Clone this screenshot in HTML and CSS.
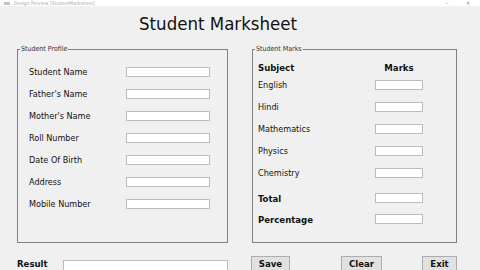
FILE: index.html
```html
<!DOCTYPE html>
<html lang="en">
<head>
  <meta charset="UTF-8" />
  <title>Student Marksheet</title>
  <link rel="stylesheet" href="styles.css">
</head>
<body>
  <div class="titlebar">
    <span class="app-icon"></span>
    <span class="caption">Design Preview [StudentMarksheet]</span>
    <span class="controls"><span>&ndash;</span><span>&#10005;</span></span>
  </div>

  <h1 class="heading">Student Marksheet</h1>

  <div class="panels">
    <fieldset class="box profile">
      <legend>Student Profile</legend>
      <div class="profile-rows">
        <div class="row"><label>Student Name</label><input type="text"></div>
        <div class="row"><label>Father's Name</label><input type="text"></div>
        <div class="row"><label>Mother's Name</label><input type="text"></div>
        <div class="row"><label>Roll Number</label><input type="text"></div>
        <div class="row"><label>Date Of Birth</label><input type="text"></div>
        <div class="row"><label>Address</label><input type="text"></div>
        <div class="row"><label>Mobile Number</label><input type="text"></div>
      </div>
    </fieldset>

    <fieldset class="box marks">
      <legend>Student Marks</legend>
      <div class="marks-rows">
        <div class="head-row"><span class="subject">Subject</span><span class="marks-head">Marks</span></div>
        <div class="row"><label>English</label><input type="text"></div>
        <div class="row"><label>Hindi</label><input type="text"></div>
        <div class="row"><label>Mathematics</label><input type="text"></div>
        <div class="row"><label>Physics</label><input type="text"></div>
        <div class="row"><label>Chemistry</label><input type="text"></div>
        <div class="row total"><label>Total</label><input type="text"></div>
        <div class="row percent"><label>Percentage</label><input type="text"></div>
      </div>
    </fieldset>
  </div>

  <div class="footer">
    <div class="result">
      <label>Result</label>
      <input type="text">
    </div>
    <div class="actions">
      <button class="btn save">Save</button>
      <button class="btn clear">Clear</button>
      <button class="btn exit">Exit</button>
    </div>
  </div>
</body>
</html>
```

FILE: styles.css
```css
body {
  margin: 0;
  width: 480px;
  height: 270px;
  overflow: hidden;
  background: #f0f0f0;
  color: #111;
  font-family: "DejaVu Sans Condensed", "DejaVu Sans", sans-serif;
  font-stretch: condensed;
  font-size: 9px;
}
/* window caption strip, mostly cut off at the top */
.titlebar {
  height: 6px;
  background: #fff;
  display: flex;
  align-items: center;
  padding-left: 4px;
  color: #a8a8a8;
  font-size: 5px;
  line-height: 6px;
}
.app-icon {
  width: 6px;
  height: 3px;
  margin-right: 4px;
  background: #b7c3cf;
}
.controls {
  margin-left: auto;
  margin-right: 10px;
  display: flex;
  gap: 18px;
  color: #777;
}
.heading {
  margin: 0;
  padding: 7px 0 11px 139px;
  font-size: 18.5px;
  line-height: 22px;
  font-weight: normal;
  color: #111;
}
.panels {
  display: flex;
  gap: 24px;
  padding-left: 17px;
}
.box {
  box-sizing: border-box;
  height: 197px;
  margin: 0;
  padding: 0;
  min-width: 0;
  border: 1px solid #808080;
}
.box legend {
  margin-left: 2px;
  padding: 0 1px;
  font-size: 7px;
  line-height: 7px;
  color: #333;
}
.profile {
  width: 211px;
}
.marks {
  width: 205px;
}
.row {
  display: flex;
  align-items: center;
  height: 22px;
}
input[type="text"] {
  box-sizing: border-box;
  margin: 0;
  padding: 0;
  height: 10px;
  border: 1px solid #bcbcbc;
  background: #fff;
}
.profile-rows {
  padding: 8px 0 0 11px;
}
.profile-rows label {
  width: 97px;
}
.profile-rows input {
  width: 84px;
}
.marks-rows {
  padding: 7px 0 0 5px;
}
.head-row {
  display: flex;
  align-items: center;
  height: 14px;
  font-weight: bold;
  font-size: 9.5px;
}
.subject {
  width: 117px;
}
.marks-head {
  width: 48px;
  text-align: center;
}
.marks-rows label {
  width: 117px;
}
.marks-rows input {
  width: 48px;
}
.total, .percent {
  font-weight: bold;
  font-size: 9.5px;
}
.total {
  margin-top: 3px;
}
.percent {
  height: 20px;
}
.footer {
  display: flex;
  align-items: flex-start;
  padding: 13px 0 0 17px;
}
.result {
  display: flex;
  width: 211px;
}
.result label {
  width: 46px;
  line-height: 16px;
  font-weight: bold;
  font-size: 9.5px;
}
.result input {
  width: 165px;
  height: 14px;
  margin-top: 4px;
}
.actions {
  display: flex;
  margin-left: 23px;
}
.btn {
  height: 16px;
  padding: 0;
  border: 1px solid #adadad;
  background: #e1e1e1;
  color: #111;
  font-family: inherit;
  font-stretch: condensed;
  font-weight: bold;
  font-size: 9.5px;
  line-height: 14px;
}
.save {
  width: 39px;
}
.clear {
  width: 41px;
  margin-left: 51px;
}
.exit {
  width: 35px;
  margin-left: 40px;
}
```
